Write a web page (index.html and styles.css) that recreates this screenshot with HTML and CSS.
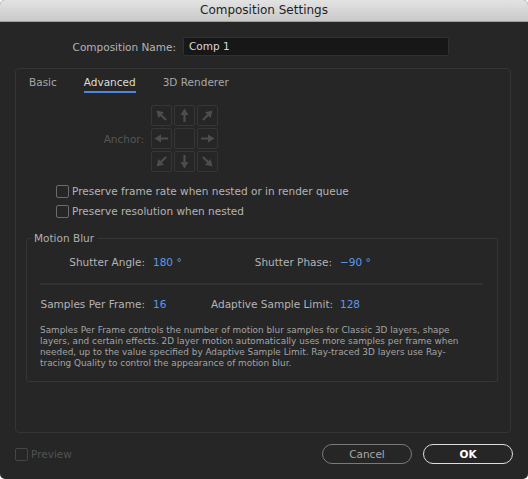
FILE: index.html
```html
<!DOCTYPE html>
<html>
<head>
<meta charset="utf-8">
<title>Composition Settings</title>
<link rel="stylesheet" href="styles.css">
</head>
<body>
<div class="window">
  <div class="titlebar">Composition Settings</div>
  <div class="content">
    <div class="name-row">
      <span class="name-label">Composition Name:</span>
      <div class="name-input">Comp 1</div>
    </div>

    <div class="panel">
      <div class="tabs">
        <span class="tab">Basic</span>
        <span class="tab active">Advanced</span>
        <span class="tab">3D Renderer</span>
      </div>

      <div class="anchor-row">
        <span class="anchor-label">Anchor:</span>
        <div class="anchor-grid">
          <div class="cell"><svg class="arrow r-315" viewBox="0 0 19 19"><path d="M9.5 16V8" /><polygon points="9.5,2.5 5.5,9 13.5,9" /></svg></div>
          <div class="cell"><svg class="arrow" viewBox="0 0 19 19"><path d="M9.5 16V8" /><polygon points="9.5,2.5 5.5,9 13.5,9" /></svg></div>
          <div class="cell"><svg class="arrow r-45" viewBox="0 0 19 19"><path d="M9.5 16V8" /><polygon points="9.5,2.5 5.5,9 13.5,9" /></svg></div>
          <div class="cell"><svg class="arrow r-270" viewBox="0 0 19 19"><path d="M9.5 16V8" /><polygon points="9.5,2.5 5.5,9 13.5,9" /></svg></div>
          <div class="cell"></div>
          <div class="cell"><svg class="arrow r-90" viewBox="0 0 19 19"><path d="M9.5 16V8" /><polygon points="9.5,2.5 5.5,9 13.5,9" /></svg></div>
          <div class="cell"><svg class="arrow r-225" viewBox="0 0 19 19"><path d="M9.5 16V8" /><polygon points="9.5,2.5 5.5,9 13.5,9" /></svg></div>
          <div class="cell"><svg class="arrow r-180" viewBox="0 0 19 19"><path d="M9.5 16V8" /><polygon points="9.5,2.5 5.5,9 13.5,9" /></svg></div>
          <div class="cell"><svg class="arrow r-135" viewBox="0 0 19 19"><path d="M9.5 16V8" /><polygon points="9.5,2.5 5.5,9 13.5,9" /></svg></div>
        </div>
      </div>

      <div class="checks">
        <label class="check"><span class="box"></span>Preserve frame rate when nested or in render queue</label>
        <label class="check"><span class="box"></span>Preserve resolution when nested</label>
      </div>

      <fieldset class="group">
        <legend>Motion Blur</legend>
        <div class="group-body">
          <div class="params">
            <span class="plabel">Shutter Angle:</span>
            <span class="pvalue">180 °</span>
            <span class="plabel">Shutter Phase:</span>
            <span class="pvalue">−90 °</span>
          </div>
          <div class="sep"></div>
          <div class="params">
            <span class="plabel">Samples Per Frame:</span>
            <span class="pvalue">16</span>
            <span class="plabel">Adaptive Sample Limit:</span>
            <span class="pvalue">128</span>
          </div>
          <p class="desc">Samples Per Frame controls the number of motion blur samples for Classic 3D layers, shape<br>layers, and certain effects. 2D layer motion automatically uses more samples per frame when<br>needed, up to the value specified by Adaptive Sample Limit. Ray-traced 3D layers use Ray-<br>tracing Quality to control the appearance of motion blur.</p>
        </div>
      </fieldset>
    </div>

    <div class="footer">
      <label class="check disabled"><span class="box"></span>Preview</label>
      <div class="buttons">
        <button class="btn">Cancel</button>
        <button class="btn primary">OK</button>
      </div>
    </div>
  </div>
</div>
</body>
</html>
```

FILE: styles.css
```css
* { box-sizing: border-box; }

html, body {
  margin: 0;
  padding: 0;
  background: #ffffff;
}

body {
  font-family: "DejaVu Sans", "Liberation Sans", sans-serif;
  font-size: 10.5px;
  color: #b0b0b0;
}

.window {
  width: 528px;
  height: 479px;
  background: #262626;
  border-radius: 5px;
  overflow: hidden;
}

.titlebar {
  height: 22px;
  line-height: 21px;
  text-align: center;
  font-size: 12px;
  color: #1e1e1e;
  background: linear-gradient(#e3e3e3, #c9c9c9);
  border-bottom: 1px solid #9e9e9e;
}

.content {
  padding: 0 17px 0 15px;
}

.name-row {
  display: flex;
  align-items: center;
  gap: 7px;
  margin-top: 15px;
  height: 19px;
}

.name-label {
  width: 161px;
  text-align: right;
  color: #b4b4b4;
}

.name-input {
  width: 266px;
  height: 19px;
  line-height: 17px;
  padding-left: 5px;
  background: #171717;
  border: 1px solid #303030;
  border-radius: 2px;
  color: #d8d8d8;
}

.panel {
  margin-top: 12px;
  height: 365px;
  border: 1px solid #353535;
  border-radius: 4px;
}

.tabs {
  display: flex;
  gap: 27px;
  padding: 6px 0 0 13px;
}

.tab {
  line-height: 14px;
  padding-bottom: 2px;
  border-bottom: 2px solid transparent;
  color: #a8a8a8;
}

.tab.active {
  color: #dcdcdc;
  border-bottom-color: #4d86dc;
}

.anchor-row {
  display: flex;
  align-items: center;
  gap: 7px;
  margin-top: 12px;
}

.anchor-label {
  width: 128px;
  text-align: right;
  color: #555555;
}

.anchor-grid {
  display: grid;
  grid-template-columns: repeat(3, 21px);
  grid-template-rows: repeat(3, 21px);
  gap: 2px;
}

.cell {
  border: 1px solid #363636;
  border-radius: 2px;
  display: flex;
  align-items: center;
  justify-content: center;
}

.arrow {
  width: 19px;
  height: 19px;
}

.arrow path {
  stroke: #4d4d4d;
  stroke-width: 2.2;
  fill: none;
}

.arrow polygon {
  fill: #4d4d4d;
}

.r-45 { transform: rotate(45deg); }
.r-90 { transform: rotate(90deg); }
.r-135 { transform: rotate(135deg); }
.r-180 { transform: rotate(180deg); }
.r-225 { transform: rotate(225deg); }
.r-270 { transform: rotate(270deg); }
.r-315 { transform: rotate(315deg); }

.checks {
  margin-top: 9px;
  padding-left: 40px;
}

.check {
  display: flex;
  align-items: center;
  gap: 3px;
  height: 20px;
  color: #b4b4b4;
}

.box {
  width: 13px;
  height: 13px;
  border: 1px solid #6b6b6b;
  border-radius: 2px;
}

.group {
  margin: 10px 12px 0 10px;
  padding: 0;
  height: 151px;
  border: 1px solid #363636;
  border-radius: 3px;
}

.group legend {
  margin-left: 4px;
  padding: 0 3px;
  line-height: 14px;
  color: #b0b0b0;
}

.group-body {
  padding: 10px 14px 0 13px;
}

.params {
  display: grid;
  grid-template-columns: 105px 50px 121px 1fr;
  column-gap: 8px;
  line-height: 14px;
  white-space: nowrap;
}

.plabel {
  text-align: right;
  color: #b4b4b4;
}

.pvalue {
  color: #5b9bed;
}

.sep {
  height: 2px;
  background: #313131;
  margin: 14px 0 12px;
}

.desc {
  margin: 14px 0 0;
  font-size: 8.9px;
  line-height: 11px;
  color: #a4a4a4;
  white-space: nowrap;
}

.footer {
  display: flex;
  align-items: center;
  justify-content: space-between;
  margin-top: 11px;
  height: 20px;
}

.check.disabled {
  color: #525252;
}

.check.disabled .box {
  border-color: #464646;
}

.buttons {
  display: flex;
  gap: 11px;
  margin-right: -2px;
}

.btn {
  width: 90px;
  height: 20px;
  border-radius: 10px;
  background: #262626;
  border: 1.5px solid #7a7a7a;
  color: #a8a8a8;
  font-family: "DejaVu Sans", "Liberation Sans", sans-serif;
  font-size: 10.5px;
  padding: 0;
}

.btn.primary {
  border-color: #dedede;
  color: #ffffff;
  font-weight: bold;
}
```
